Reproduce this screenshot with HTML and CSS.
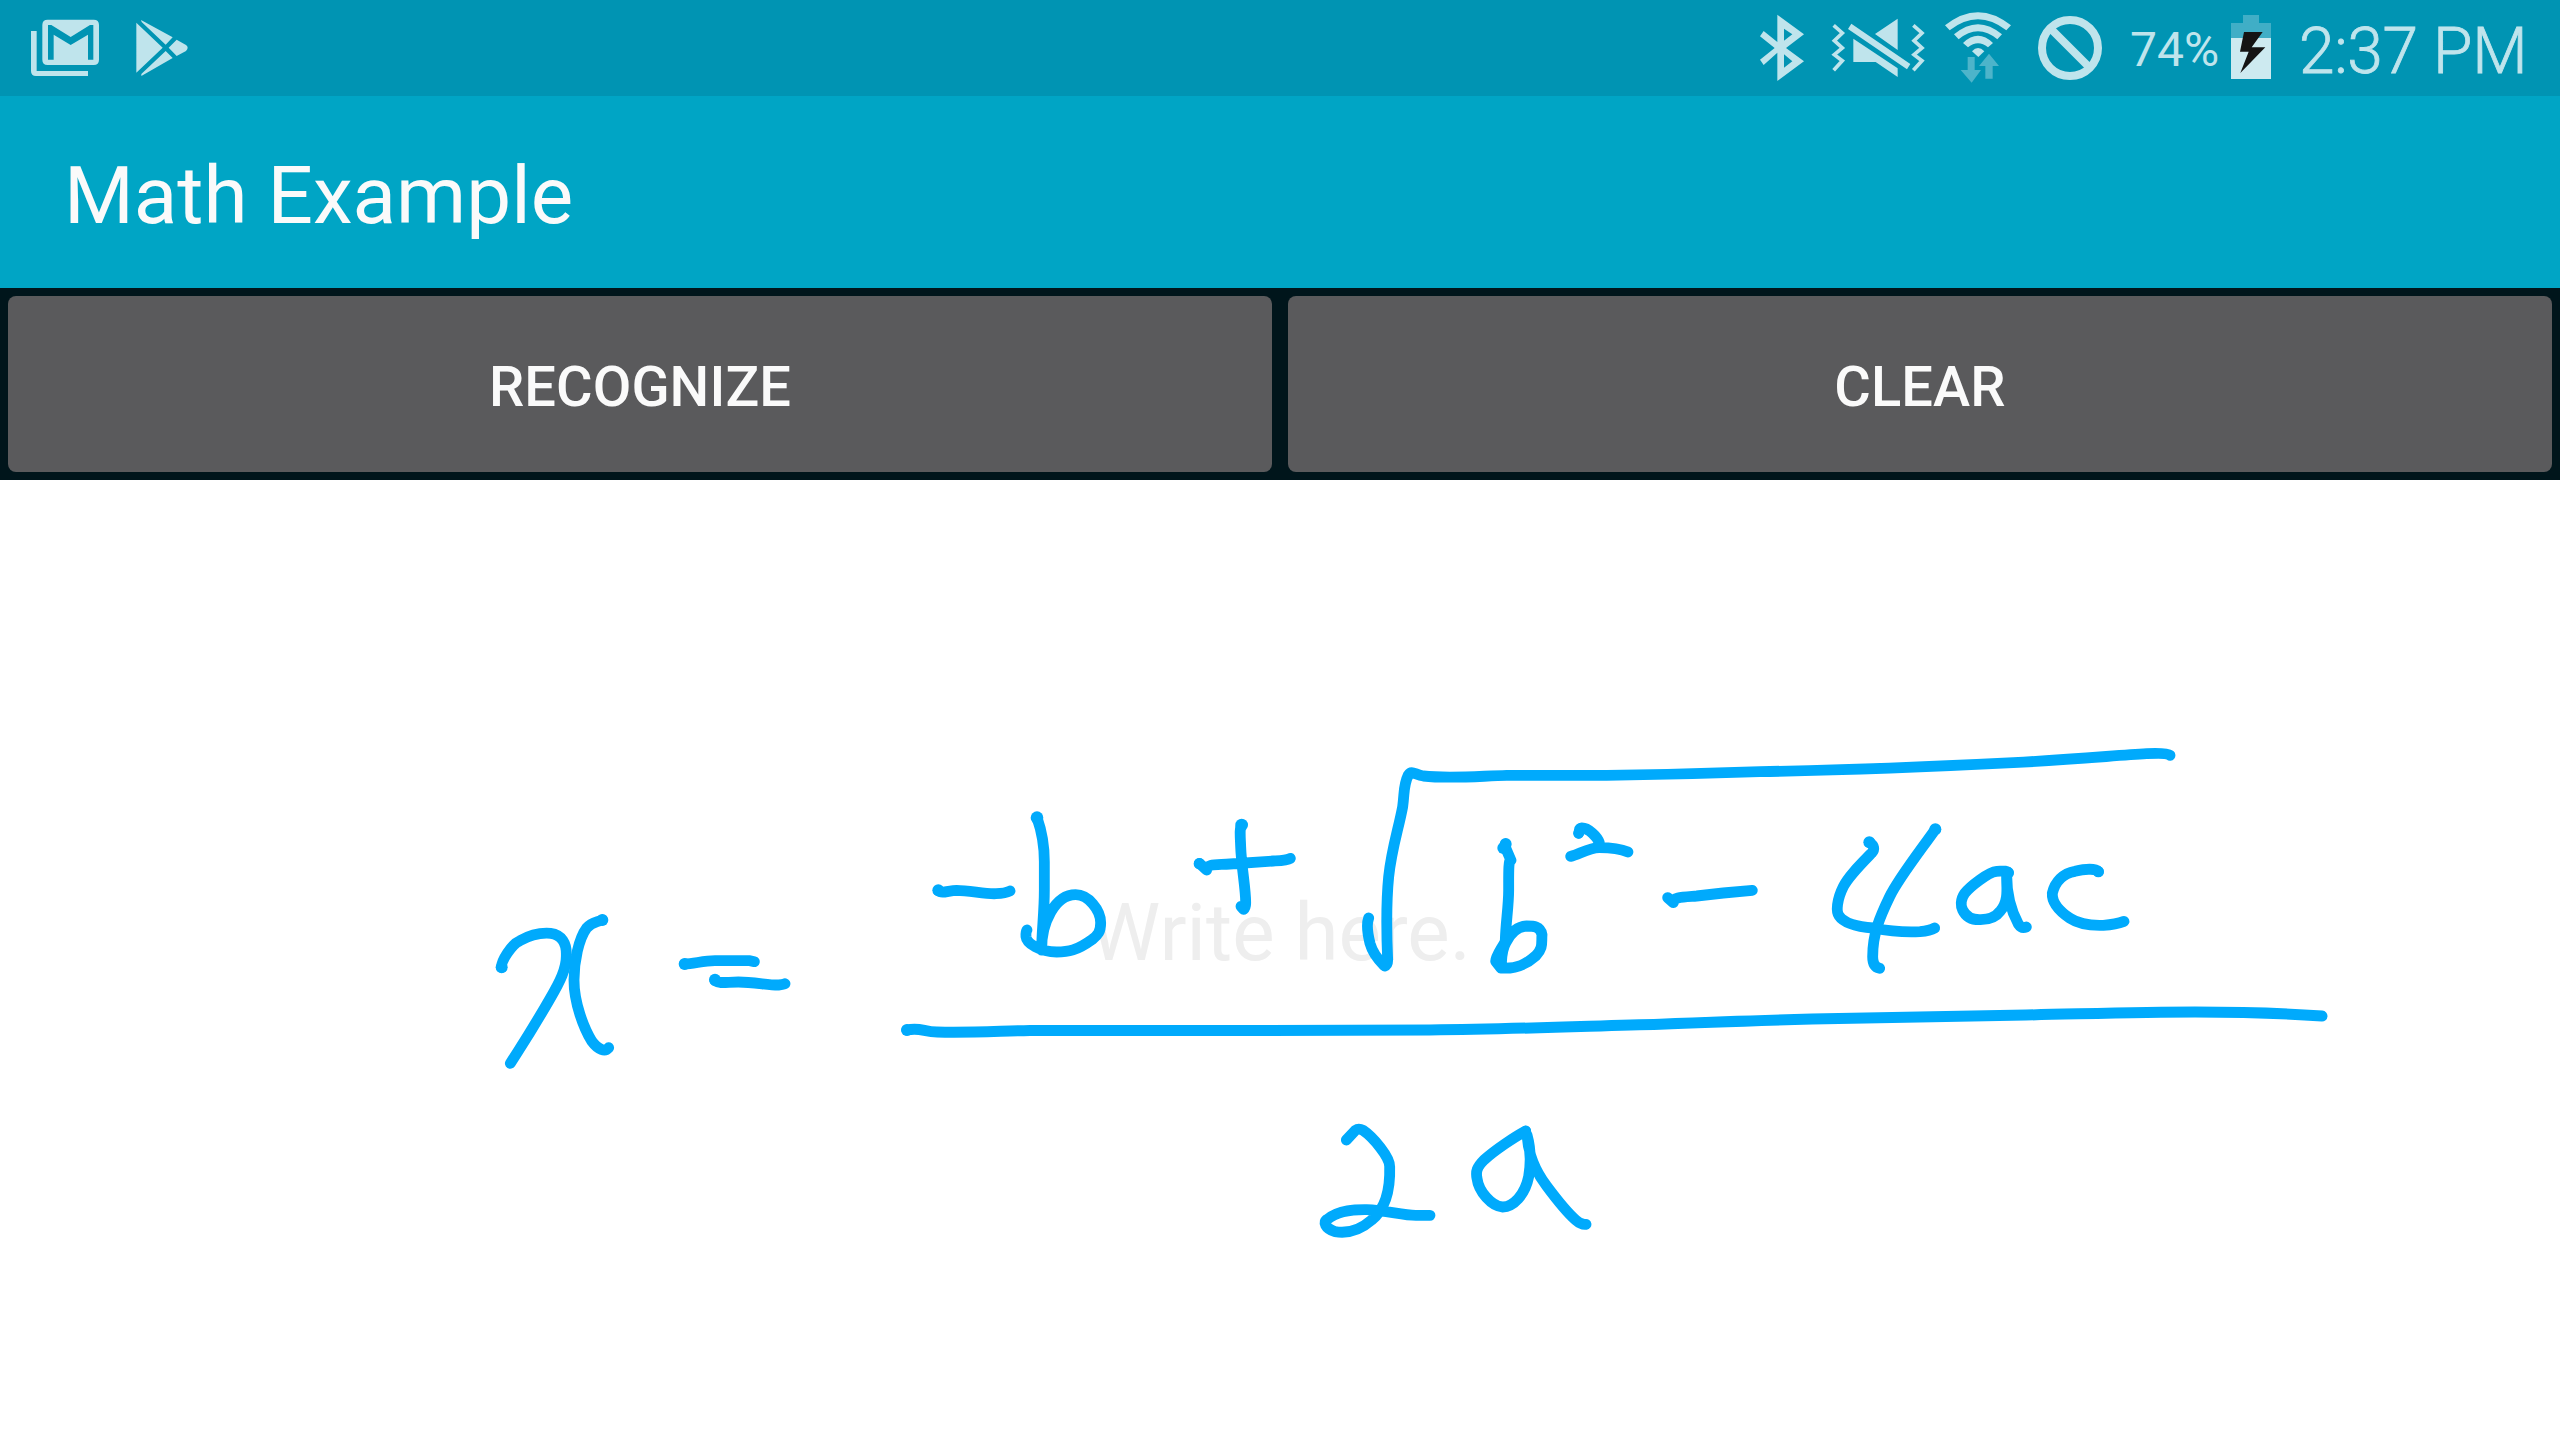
FILE: index.html
```html
<!DOCTYPE html>
<html lang="en">
<head>
<meta charset="utf-8">
<title>Math Example</title>
<link rel="stylesheet" href="styles.css">
</head>
<body>
<header class="status-bar">
  <div class="notifications">
    <svg class="icon" width="240" height="96" viewBox="0 0 720 288">
      <path d="M93 93H110V213H264V228H108Q93 228 93 213Z"/>
      <path fill-rule="evenodd" d="M143 59H281Q297 59 297 75V179Q297 195 281 195H143Q127 195 127 179V75Q127 59 143 59ZM144 75V179H161V104L212 135L264 104V179H280V75H270L212 111L154 75Z"/>
      <path d="M409 68L488 143L409 218ZM423 60L518 112L497 134L425 66ZM506 143L530 119L558 135Q568 143 558 153L530 168ZM497 153L518 174L424 228V222Z"/>
    </svg>
  </div>
  <div class="system">
    <svg class="icon" width="370" height="96" viewBox="0 0 1110 288">
      <path fill-rule="evenodd" d="M112 44L192 103L138 144L192 184L112 243V158L71 195L60 179L104 144L60 109L71 93L112 126ZM132 86V122L157 103ZM132 163V203L157 184Z"/>
      <path class="line" d="M281 76L307 99L283 122L307 144L283 164L307 182L281 211M520 76L546 99L522 122L546 144L522 164L546 182L520 211"/>
      <path d="M334 71L511 192L501 208L324 87ZM473 56V150L405 102ZM340 116L473 205V231L407 186H340Z"/>
      <path d="M615 76Q714 -3 813 76L799 91Q714 25 629 91Z"/>
      <path d="M642 103Q714 42 786 103L772 118Q714 70 656 118Z"/>
      <path d="M669 129Q714 86 759 129L744 142Q714 118 684 142Z"/>
      <path d="M696 154Q714 134 733 154L715 171Z"/>
      <path class="dim" d="M683 171H704V210H723L695 248L662 210H683ZM747 161L777 198H758V236H736V198H717Z"/>
      <circle class="ring" cx="990" cy="144" r="84"/>
      <path class="ring slash" d="M936 90L1044 198"/>
    </svg>
    <span class="percent">74%</span>
    <svg class="battery" width="40" height="64" viewBox="0 0 120 192">
      <path class="empty" d="M36 0H84V24H120V69H0V24H36Z"/>
      <path class="full" d="M0 69H120V192H0Z"/>
      <path class="bolt" d="M39 51H95L62 97H103L28 174L53 110H27Z"/>
    </svg>
    <span class="clock">2:37 PM</span>
  </div>
</header>
<div class="app-bar"><h1 class="title">Math Example</h1></div>
<div class="actions">
  <button class="action">RECOGNIZE</button>
  <button class="action">CLEAR</button>
</div>
<main class="canvas">
  <p class="hint">Write here.</p>
  <svg class="ink" viewBox="0 480 2560 960">
    <!-- x = -->
    <g transform="translate(460 880) scale(.33333)">
      <path d="M125 262C122 245 155 192 180 182C215 162 248 158 272 160C305 164 320 190 319 225C320 265 300 305 270 356C240 408 205 466 174 514L151 550"/>
      <path d="M427 120C405 128 395 126 380 144C356 176 342 245 342 300C342 370 372 445 395 483C415 510 435 516 446 503"/>
      <path d="M674 252C700 252 730 242 765 242H870L883 245M765 302C780 312 800 306 835 306C880 306 930 316 956 315Q970 314 975 311"/>
      <circle cx="125" cy="262" r="18"/><circle cx="674" cy="252" r="18"/><circle cx="765" cy="299" r="18"/><circle cx="427" cy="120" r="18"/>
    </g>
    <!-- -b + -->
    <g transform="translate(900 780) scale(.33333)">
      <path d="M115 332C125 342 145 332 170 331C210 332 260 343 288 341Q316 340 330 333"/>
      <path d="M411 113C424 150 433 205 433 245V330C433 400 425 455 425 510C423 430 465 344 527 344C565 344 602 390 602 428C602 455 594 465 577 478C530 512 505 516 470 516C420 516 380 490 378 470Q377 456 381 450"/>
      <path d="M1025 135C1018 145 1021 170 1022 200C1024 260 1038 330 1037 370Q1037 383 1031 388L1023 379M898 250L920 270C920 250 950 255 990 252L1120 243C1145 242 1160 242 1171 235"/>
      <circle cx="115" cy="331" r="18"/><circle cx="411" cy="113" r="19"/><circle cx="1025" cy="135" r="19"/><circle cx="898" cy="251" r="17"/>
    </g>
    <!-- fraction bar -->
    <path class="rule" d="M907 1030C920 1027 924 1032 937 1032C970 1033 1000 1031 1030 1030.500C1150 1030 1300 1031 1430 1030C1520 1029 1590 1026 1660 1024.300C1710 1022 1760 1020.500 1812 1019L2026 1015C2080 1014 2140 1012 2195 1012C2240 1012 2280 1013 2322 1016"/>
    <circle cx="907" cy="1030" r="6"/>
    <!-- radical, b squared, minus -->
    <g transform="translate(1320 730) scale(.33333)">
      <path d="M146 564C140 580 142 608 150 640C160 676 180 694 194 708Q203 705 203 690C200 620 198 520 206 440C215 355 236 295 248 230C254 185 250 165 265 135C275 120 285 134 310 138C390 147 480 138 560 136H860C1020 134 1180 130 1320 125C1600 120 1860 109 2080 98C2280 87 2390 76 2480 71Q2540 68 2550 76"/>
      <path d="M557 342V354L573 391C565 385 566 430 566 480C566 530 557 580 556 630C556 642 527 675 527 694L543 714C590 718 620 702 648 677C670 653 664 640 666 614C661 588 640 588 620 588C590 590 572 608 558 637C542 665 546 690 543 714"/>
      <path d="M776 310C780 300 775 295 786 294C805 294 832 320 838 338M752 379C775 375 805 353 838 353C870 353 905 358 924 366M1043 503L1060 518C1055 501 1090 501 1130 498L1210 489L1297 481"/>
      <circle cx="557" cy="342" r="18"/><circle cx="550" cy="354" r="18"/><circle cx="776" cy="310" r="16"/>
    </g>
    <!-- 4ac -->
    <g transform="translate(1760 730) scale(.33333)">
      <path d="M328 337C343 347 345 358 335 369C295 410 265 440 250 470C230 510 228 545 237 557C255 584 302 591 340 594C380 602 440 607 480 605Q510 602 524 594"/>
      <path d="M526 298C475 370 415 446 389 500C360 560 338 610 338 680Q338 710 359 715"/>
      <path d="M745 429C742 420 724 424 710 424C685 426 630 470 614 490C600 510 603 530 608 540C620 565 640 570 662 569C690 569 710 558 721 543C750 510 738 465 740 435C740 500 755 545 775 582Q785 597 799 591"/>
      <path d="M1015 425C1005 414 970 418 945 424C910 430 885 455 877 490C875 525 908 550 930 565C960 585 1000 587 1030 586Q1068 583 1092 574"/>
      <circle cx="328" cy="337" r="18"/><circle cx="526" cy="298" r="18"/><circle cx="745" cy="428" r="17"/><circle cx="1015" cy="425" r="17"/>
    </g>
    <!-- 2a -->
    <g transform="translate(1280 1090) scale(.33333)">
      <path d="M199 150L226 121Q236 114 249 121C280 142 330 202 329 230C332 330 300 370 275 390C235 425 200 431 165 425C135 415 128 395 142 388C180 357 235 359 260 359C320 361 370 377 410 376H450"/>
      <path d="M737 123C705 140 645 180 612 210C590 232 587 245 591 265C596 305 635 349 668 351C700 350 735 315 746 260C756 200 748 160 741 135C745 200 775 255 800 288C835 335 870 375 887 390Q904 405 918 403"/>
      <circle cx="737" cy="123" r="16"/>
    </g>
  </svg>
</main>
</body>
</html>
```
FILE: styles.css
```css
* { box-sizing: border-box; }
body {
  margin: 0;
  width: 2560px;
  height: 1440px;
  display: flex;
  flex-direction: column;
  overflow: hidden;
  background: #00151b;
  font-family: Roboto, "Liberation Sans", sans-serif;
}
.status-bar {
  height: 96px;
  display: flex;
  justify-content: space-between;
  background: #0094b3;
  color: #bfe4ec;
}
.notifications, .system { display: flex; }
.icon { display: block; fill: #bfe4ec; }
.line { fill: none; stroke: #bfe4ec; stroke-width: 11; }
.ring { fill: none; stroke: #bfe4ec; stroke-width: 24; }
.dim { fill: #4db4ca; }
.percent {
  width: 110px;
  padding: 2px 0 0 20px;
  font-size: 48px;
  line-height: 96px;
  white-space: nowrap;
}
.battery { margin: 15px 0 0 11px; }
.empty { fill: #40aec6; }
.full { fill: #cdeaf0; }
.bolt { fill: #141414; }
.clock {
  width: 261px;
  margin-left: 28px;
  padding-top: 4px;
  font-size: 64px;
  font-weight: 300;
  letter-spacing: -0.3px;
  -webkit-text-stroke: 0.8px #bfe4ec;
  line-height: 96px;
  white-space: nowrap;
}
.app-bar {
  height: 192px;
  display: flex;
  align-items: center;
  padding: 7px 64px 0;
  background: #00a5c5;
}
.title {
  margin: 0;
  color: #fafafa;
  font-size: 80px;
  font-weight: 400;
}
.actions {
  height: 192px;
  display: flex;
  gap: 16px;
  padding: 8px;
}
.action {
  flex: 1;
  border: 0;
  border-radius: 8px;
  padding: 6px 0 0;
  background: #5a5a5c;
  color: #fafafa;
  font: 500 56px Roboto, "Liberation Sans", sans-serif;
  letter-spacing: 0.1px;
}
.canvas {
  position: relative;
  height: 960px;
  display: flex;
  align-items: center;
  justify-content: center;
  padding-bottom: 54px;
  background: #fff;
}
.hint {
  margin: 0;
  color: #eee;
  font-size: 80px;
}
.ink {
  position: absolute;
  inset: 0;
  width: 2560px;
  height: 960px;
  fill: #00aafc;
}
.ink path {
  fill: none;
  stroke: #00aafc;
  stroke-width: 32.500;
  stroke-linecap: round;
  stroke-linejoin: round;
}
.ink .rule { stroke-width: 11; }
```
